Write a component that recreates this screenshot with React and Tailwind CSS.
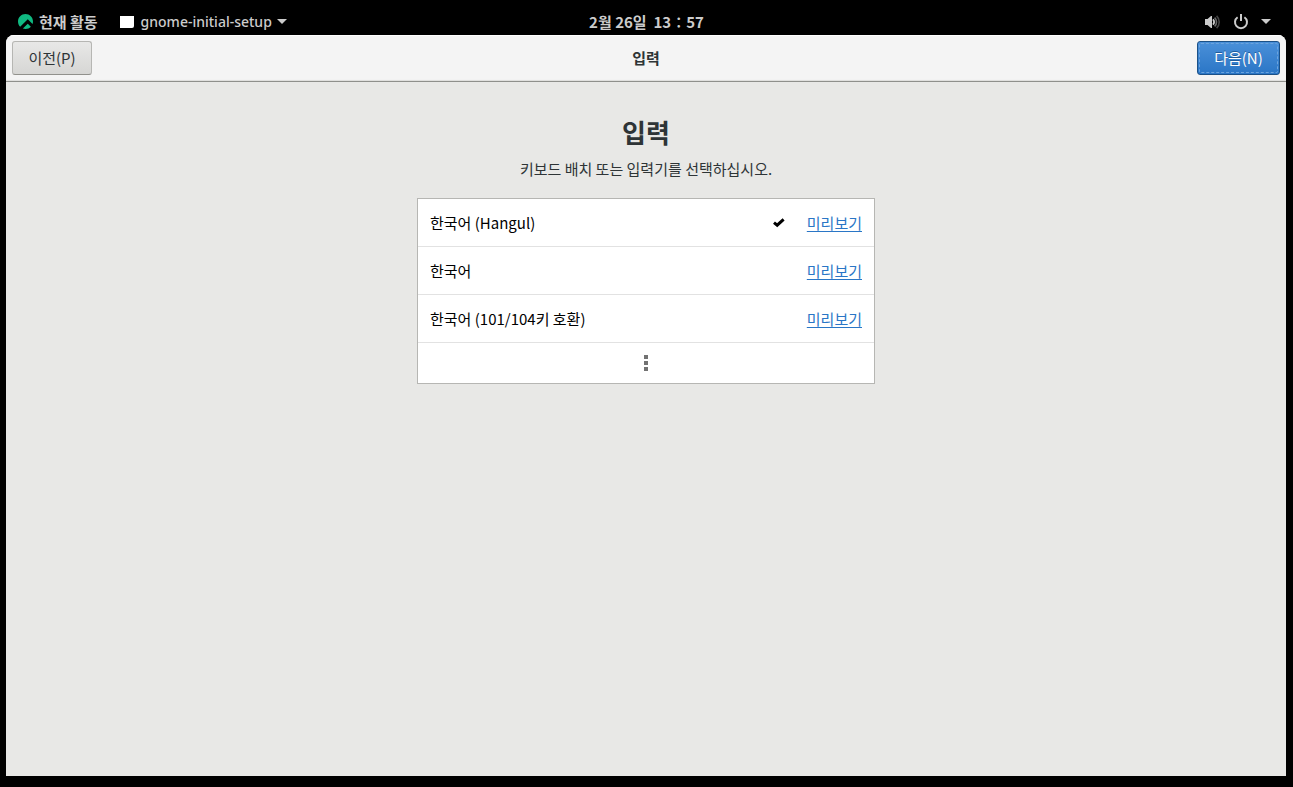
import { useState } from 'react';

const layouts = [
    { id: 'hangul', name: '한국어 (Hangul)' },
    { id: 'kr', name: '한국어' },
    { id: 'kr104', name: '한국어 (101/104키 호환)' },
];

const DistroLogo = () => (
    <svg width="15" height="15" viewBox="0 0 24 24" fill="#10b981" aria-hidden="true">
        <path d="M23.332 15.957c.433-1.239.668-2.57.668-3.957 0-6.627-5.373-12-12-12S0 5.373 0 12c0 3.28 1.315 6.251 3.447 8.417L15.62 8.245l7.712 7.712z" />
        <path d="M20.6 20.4l-4.98-4.98-7.9 7.8c1.35.5 2.8.78 4.28.78 3.4 0 6.4-1.3 8.6-3.6z" />
    </svg>
);

const CaretDown = () => (
    <svg width="10" height="5" viewBox="0 0 10 5" fill="currentColor" aria-hidden="true">
        <path d="M0 0h10L5 5z" />
    </svg>
);

const VolumeIcon = () => (
    <svg width="16" height="16" viewBox="0 0 16 16" fill="none" aria-hidden="true">
        <path d="M0 5h2.5L6 2h1v12H6l-3.5-3H0z" fill="currentColor" />
        <path d="M8 5.4a3.6 3.6 0 0 1 0 5.2" stroke="currentColor" strokeWidth="1.8" />
        <path d="M9.6 3.6a6 6 0 0 1 0 8.8" stroke="#6b6b6b" strokeWidth="1.6" />
        <path d="M11.6 1.8a8.6 8.6 0 0 1 0 12.4" stroke="#444" strokeWidth="1.6" />
    </svg>
);

const PowerIcon = () => (
    <svg width="16" height="16" viewBox="0 0 16 16" fill="none" stroke="currentColor" strokeWidth="2" aria-hidden="true">
        <path d="M4.6 3.2a6 6 0 1 0 6.8 0" />
        <path d="M8 0v7" />
    </svg>
);

const CheckIcon = () => (
    <svg width="12" height="10" viewBox="0 0 12 10" fill="none" stroke="#000" strokeWidth="3" aria-hidden="true">
        <path d="M1 4.6 4.2 7.2 10.6 1.4" />
    </svg>
);

const TopBar = () => (
    <header className="grid h-[35px] grid-cols-[1fr_auto_1fr] items-center px-[18px] pt-2 font-medium text-[#ccc]">
        <div className="flex items-center gap-[22px]">
            <button className="flex items-center gap-1.5 font-bold">
                <DistroLogo />
                현재 활동
            </button>
            <button className="flex items-center gap-[5px]">
                <span className="mr-0.5 h-3 w-3.5 rounded-br-xs bg-white" />
                <span className="font-['Noto_Sans'] text-sm font-medium">gnome-initial-setup</span>
                <CaretDown />
            </button>
        </div>
        <button className="font-bold whitespace-pre">2월 26일  13∶57</button>
        <button className="flex items-center gap-3 justify-self-end pr-1" aria-label="시스템">
            <VolumeIcon />
            <PowerIcon />
            <CaretDown />
        </button>
    </header>
);

const App = () => {
    const [selected, setSelected] = useState('hangul');

    return (
        <div className="flex min-h-screen flex-col bg-black font-['Noto_Sans_CJK_KR',sans-serif] text-[15px] leading-5">
            <TopBar />
            <div className="mr-[7px] mb-[11px] ml-1.5 flex flex-1 flex-col overflow-hidden rounded-t-lg bg-[#e8e8e6] text-[#2e3436]">
                <div className="grid h-[47px] grid-cols-[1fr_auto_1fr] items-center border-b border-[#8f908c] bg-[#f4f4f4] px-1.5 shadow-[inset_0_1px_#fff,inset_0_-1px_1px_#dededc]">
                    <button className="h-[34px] w-20 justify-self-start rounded-[3px] border border-[#b6b6b3] border-b-[#91918c] bg-linear-to-b from-[#e8e8e7] to-[#d6d6d4]">
                        이전(P)
                    </button>
                    <div className="font-bold">입력</div>
                    <button className="h-[34px] w-[83px] justify-self-end rounded-[3px] border border-[#1c5187] bg-linear-to-b from-[#4a90d9] to-[#2a76c6] p-px text-white text-shadow-[0_-1px_#1f5b9a]">
                        <span className="flex h-full items-center justify-center rounded-xs border border-dashed border-[#6ba3dd]">다음(N)</span>
                    </button>
                </div>

                <main className="mx-auto flex w-full max-w-[458px] flex-col items-center pt-8">
                    <h1 className="text-[26px] leading-9 font-bold">입력</h1>
                    <p className="mt-[9px]">키보드 배치 또는 입력기를 선택하십시오.</p>

                    <ul className="mt-[19px] w-full border border-[#b6b6b3] bg-white text-black">
                        {layouts.map((layout) => (
                            <li key={layout.id} className="flex h-12 items-center gap-[22px] border-b border-[#e2e2e2] px-3">
                                <button
                                    className="flex h-full flex-1 items-center justify-between text-left"
                                    aria-pressed={selected === layout.id}
                                    onClick={() => setSelected(layout.id)}
                                >
                                    {layout.name}
                                    {selected === layout.id && <CheckIcon />}
                                </button>
                                <a href="#preview" className="text-[#2a76c6] underline underline-offset-2">
                                    미리보기
                                </a>
                            </li>
                        ))}
                        <li>
                            <button className="flex h-10 w-full flex-col items-center justify-center gap-0.5" aria-label="더 보기">
                                <span className="size-1 bg-[#727272]" />
                                <span className="size-1 bg-[#727272]" />
                                <span className="size-1 bg-[#727272]" />
                            </button>
                        </li>
                    </ul>
                </main>
            </div>
        </div>
    );
};

export default App;
